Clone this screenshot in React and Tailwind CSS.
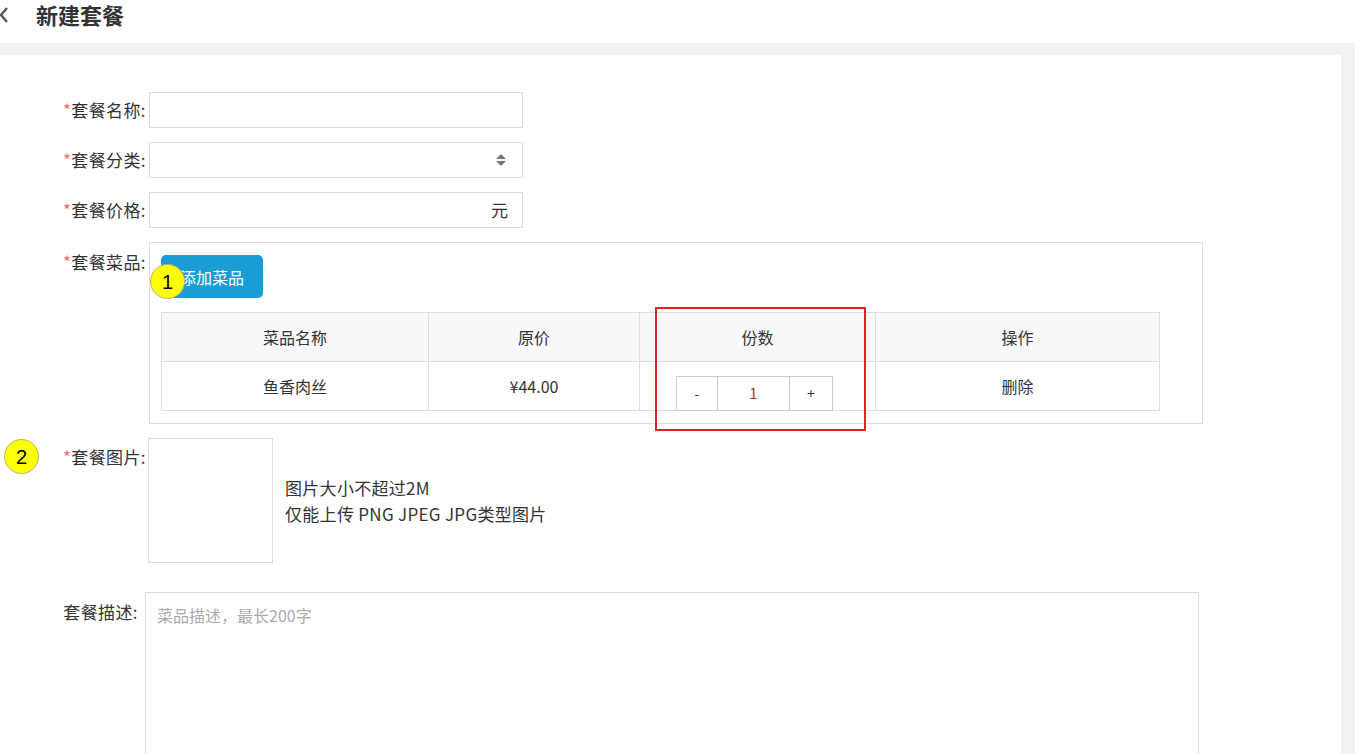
import React from "react";

const FONT = { fontFamily: '"Noto Sans CJK SC", "Noto Sans", sans-serif' };

function Label({ text, required = true, className = "" }) {
  return (
    <div className={`h-[36px] leading-[36px] text-right text-[17px] tracking-[0.4px] text-[#333] whitespace-nowrap shrink-0 ${className}`}>
      {required && <span className="text-[#f56c6c]">*</span>}
      {text}
    </div>
  );
}

function Badge({ n, className = "" }) {
  return (
    <div className={`absolute w-[35px] h-[35px] rounded-full bg-[#ffff00] border border-[#b8b080] flex items-center justify-center text-[20px] text-black leading-none ${className}`} style={{ fontFamily: '"Liberation Sans", Arial, sans-serif' }}>
      {n}
    </div>
  );
}

export default function App() {
  return (
    <div className="w-[1369px] h-[754px] overflow-hidden bg-white" style={FONT}>
      {/* header */}
      <div className="h-[43px] flex items-start pt-[1px]">
        <svg width="10" height="18" viewBox="0 0 10 18" className="mt-[5px] ml-[-1px]">
          <path d="M8 2 L2 9 L8 16" fill="none" stroke="#555" strokeWidth="2.4" />
        </svg>
        <div className="ml-[27px] text-[22px] leading-[26px] font-bold text-[#333]">新建套餐</div>
      </div>

      <div className="w-[1355px] h-[711px] bg-[#f2f2f2] pt-[12px] pr-[14px]">
        <div className="relative w-full h-full bg-white pt-[37px]">
          {/* row 1 */}
          <div className="flex">
            <Label text="套餐名称:" className="w-[146px]" />
            <div className="ml-[3px] w-[374px] h-[36px] border border-[#dcdcdc]" />
          </div>
          {/* row 2 */}
          <div className="flex mt-[14px]">
            <Label text="套餐分类:" className="w-[146px]" />
            <div className="ml-[3px] w-[374px] h-[36px] border border-[#dcdcdc] flex items-center justify-end pr-[15px]">
              <svg width="12" height="14" viewBox="0 0 12 14">
                <path d="M6 1 L11 6 L1 6 Z" fill="#777" />
                <path d="M6 13 L11 8 L1 8 Z" fill="#777" />
              </svg>
            </div>
          </div>
          {/* row 3 */}
          <div className="flex mt-[14px]">
            <Label text="套餐价格:" className="w-[146px]" />
            <div className="ml-[3px] w-[374px] h-[36px] border border-[#dcdcdc] flex items-center justify-end pr-[14px] text-[17px] text-[#333]">
              元
            </div>
          </div>
          {/* row 4 */}
          <div className="flex mt-[14px]">
            <Label text="套餐菜品:" className="w-[146px] mt-[2px]" />
            <div className="ml-[3px] w-[1054px] h-[182px] border border-[#dcdcdc] pt-[12px] px-[11px]">
              <div className="relative w-[102px] h-[43px]">
                <div className="w-[102px] h-[43px] rounded-[5px] bg-[#1a9dd5] text-white text-[16px] flex items-center justify-center">
                  添加菜品
                </div>
                <Badge n="1" className="left-[-11px] top-[9px]" />
              </div>
              <div className="mt-[14px] w-[999px] border border-[#dedede] text-[16px] text-[#333]">
                <div className="flex h-[49px] bg-[#f7f8fa] border-b border-[#dedede]">
                  <div className="w-[267px] flex items-center justify-center border-r border-[#dedede]">菜品名称</div>
                  <div className="w-[211px] flex items-center justify-center border-r border-[#dedede]">原价</div>
                  <div className="w-[236px] flex items-center justify-center border-r border-[#dedede]">份数</div>
                  <div className="flex-1 flex items-center justify-center">操作</div>
                </div>
                <div className="flex h-[48px]">
                  <div className="w-[267px] flex items-center justify-center border-r border-[#dedede]">鱼香肉丝</div>
                  <div className="w-[211px] flex items-center justify-center border-r border-[#dedede]">¥44.00</div>
                  <div className="w-[236px] border-r border-[#dedede] pt-[14px] pl-[36px]">
                    <div className="flex w-[157px] h-[35px] border border-[#cccccc] text-[14px] bg-white">
                      <div className="w-[41px] flex items-center justify-center border-r border-[#cccccc]">-</div>
                      <div className="w-[72px] flex items-center justify-center border-r border-[#cccccc] text-[#b03030] text-[15px]">1</div>
                      <div className="flex-1 flex items-center justify-center">+</div>
                    </div>
                  </div>
                  <div className="flex-1 flex items-center justify-center">删除</div>
                </div>
              </div>
            </div>
          </div>
          {/* row 5 */}
          <div className="relative flex mt-[14px]">
            <Badge n="2" className="left-[4px] top-[1px]" />
            <Label text="套餐图片:" className="w-[146px] mt-[1px]" />
            <div className="ml-[2px] w-[125px] h-[125px] border border-[#dcdcdc] shrink-0" />
            <div className="ml-[12px] self-center text-[17px] leading-[26px] tracking-[0.3px] text-[#333]">
              <div>图片大小不超过2M</div>
              <div>仅能上传 PNG JPEG JPG类型图片</div>
            </div>
          </div>
          {/* row 6 */}
          <div className="flex mt-[29px]">
            <Label text="套餐描述:" required={false} className="w-[138px] mt-[2px]" />
            <div className="ml-[7px] w-[1054px] h-[180px] border border-[#dcdcdc] pl-[11px] pt-[10px] text-[16px] text-[#aaa]">
              菜品描述，最长200字
            </div>
          </div>

          {/* red highlight */}
          <div className="absolute left-[655px] top-[252px] w-[211px] h-[124px] border-2 border-[#e41f26]" />
        </div>
      </div>
    </div>
  );
}
